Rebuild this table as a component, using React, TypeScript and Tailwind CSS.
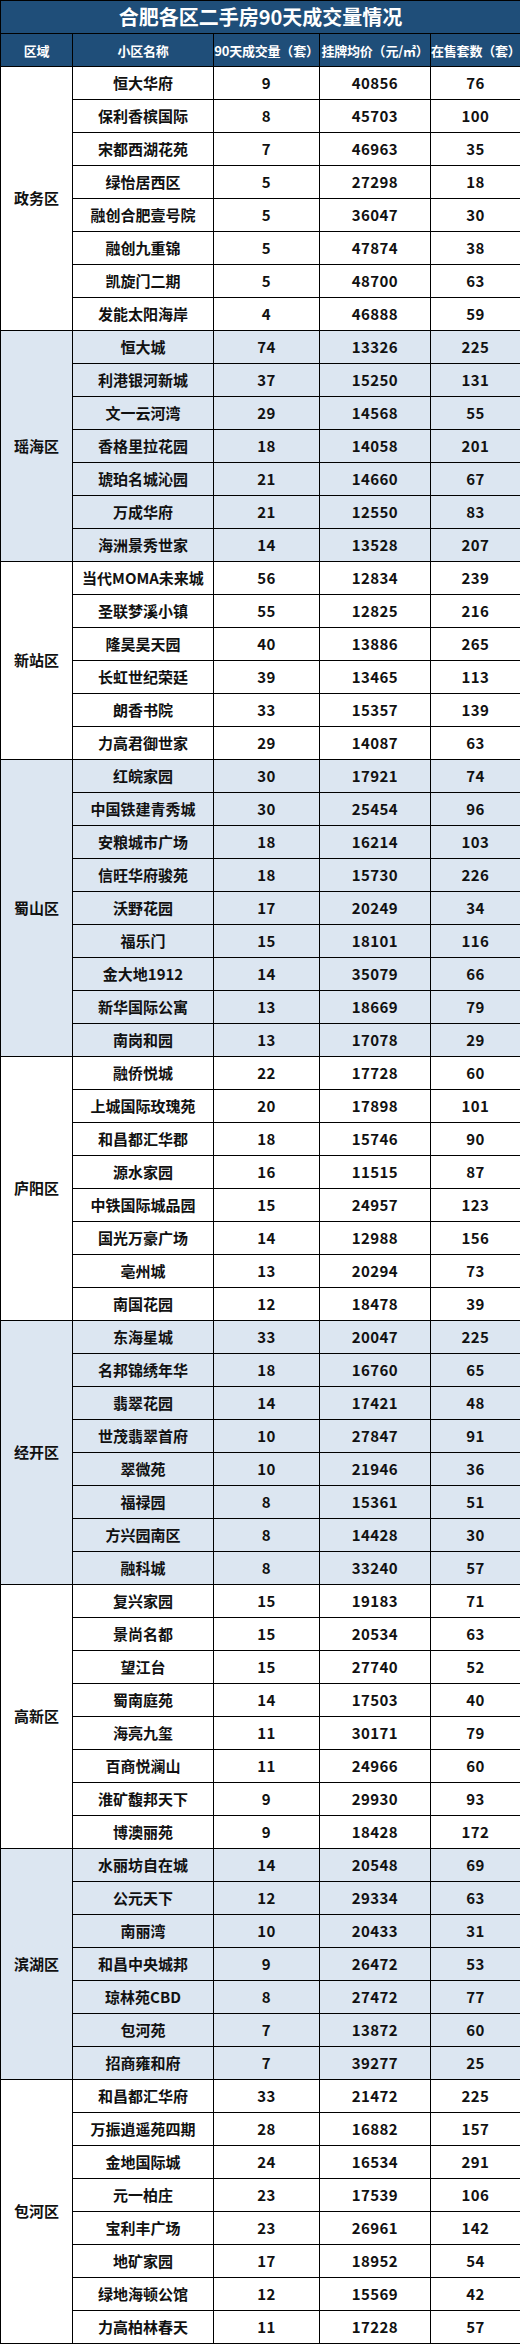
const districts: { name: string; rows: [string, number, number, number][] }[] = [
  {
    name: "政务区",
    rows: [
      ["恒大华府", 9, 40856, 76],
      ["保利香槟国际", 8, 45703, 100],
      ["宋都西湖花苑", 7, 46963, 35],
      ["绿怡居西区", 5, 27298, 18],
      ["融创合肥壹号院", 5, 36047, 30],
      ["融创九重锦", 5, 47874, 38],
      ["凯旋门二期", 5, 48700, 63],
      ["发能太阳海岸", 4, 46888, 59],
    ],
  },
  {
    name: "瑶海区",
    rows: [
      ["恒大城", 74, 13326, 225],
      ["利港银河新城", 37, 15250, 131],
      ["文一云河湾", 29, 14568, 55],
      ["香格里拉花园", 18, 14058, 201],
      ["琥珀名城沁园", 21, 14660, 67],
      ["万成华府", 21, 12550, 83],
      ["海洲景秀世家", 14, 13528, 207],
    ],
  },
  {
    name: "新站区",
    rows: [
      ["当代MOMA未来城", 56, 12834, 239],
      ["圣联梦溪小镇", 55, 12825, 216],
      ["隆昊昊天园", 40, 13886, 265],
      ["长虹世纪荣廷", 39, 13465, 113],
      ["朗香书院", 33, 15357, 139],
      ["力高君御世家", 29, 14087, 63],
    ],
  },
  {
    name: "蜀山区",
    rows: [
      ["红皖家园", 30, 17921, 74],
      ["中国铁建青秀城", 30, 25454, 96],
      ["安粮城市广场", 18, 16214, 103],
      ["信旺华府骏苑", 18, 15730, 226],
      ["沃野花园", 17, 20249, 34],
      ["福乐门", 15, 18101, 116],
      ["金大地1912", 14, 35079, 66],
      ["新华国际公寓", 13, 18669, 79],
      ["南岗和园", 13, 17078, 29],
    ],
  },
  {
    name: "庐阳区",
    rows: [
      ["融侨悦城", 22, 17728, 60],
      ["上城国际玫瑰苑", 20, 17898, 101],
      ["和昌都汇华郡", 18, 15746, 90],
      ["源水家园", 16, 11515, 87],
      ["中铁国际城品园", 15, 24957, 123],
      ["国光万豪广场", 14, 12988, 156],
      ["亳州城", 13, 20294, 73],
      ["南国花园", 12, 18478, 39],
    ],
  },
  {
    name: "经开区",
    rows: [
      ["东海星城", 33, 20047, 225],
      ["名邦锦绣年华", 18, 16760, 65],
      ["翡翠花园", 14, 17421, 48],
      ["世茂翡翠首府", 10, 27847, 91],
      ["翠微苑", 10, 21946, 36],
      ["福禄园", 8, 15361, 51],
      ["方兴园南区", 8, 14428, 30],
      ["融科城", 8, 33240, 57],
    ],
  },
  {
    name: "高新区",
    rows: [
      ["复兴家园", 15, 19183, 71],
      ["景尚名都", 15, 20534, 63],
      ["望江台", 15, 27740, 52],
      ["蜀南庭苑", 14, 17503, 40],
      ["海亮九玺", 11, 30171, 79],
      ["百商悦澜山", 11, 24966, 60],
      ["淮矿馥邦天下", 9, 29930, 93],
      ["博澳丽苑", 9, 18428, 172],
    ],
  },
  {
    name: "滨湖区",
    rows: [
      ["水丽坊自在城", 14, 20548, 69],
      ["公元天下", 12, 29334, 63],
      ["南丽湾", 10, 20433, 31],
      ["和昌中央城邦", 9, 26472, 53],
      ["琼林苑CBD", 8, 27472, 77],
      ["包河苑", 7, 13872, 60],
      ["招商雍和府", 7, 39277, 25],
    ],
  },
  {
    name: "包河区",
    rows: [
      ["和昌都汇华府", 33, 21472, 225],
      ["万振逍遥苑四期", 28, 16882, 157],
      ["金地国际城", 24, 16534, 291],
      ["元一柏庄", 23, 17539, 106],
      ["宝利丰广场", 23, 26961, 142],
      ["地矿家园", 17, 18952, 54],
      ["绿地海顿公馆", 12, 15569, 42],
      ["力高柏林春天", 11, 17228, 57],
    ],
  },
];

const headers = ["区域", "小区名称", "90天成交量（套）", "挂牌均价（元/㎡）", "在售套数（套）"];

export default function App() {
  return (
    <div className="w-[520px] bg-white font-['Noto_Sans_CJK_SC',sans-serif] text-[#111]">
      <table className="w-[520px] table-fixed border-collapse">
        <colgroup>
          <col className="w-[72px]" />
          <col className="w-[141px]" />
          <col className="w-[106px]" />
          <col className="w-[111px]" />
          <col className="w-[90px]" />
        </colgroup>
        <thead>
          <tr className="h-[33px]">
            <th
              colSpan={5}
              className="border border-black bg-[#1F4E79] p-0 text-center text-[20px] font-bold leading-none text-white"
            >
              合肥各区二手房90天成交量情况
            </th>
          </tr>
          <tr className="h-[33px]">
            {headers.map((h) => (
              <th
                key={h}
                className="whitespace-nowrap border border-black bg-[#1F4E79] p-0 text-center text-[13px] font-bold leading-none tracking-[-0.2px] text-white"
              >
                {h}
              </th>
            ))}
          </tr>
        </thead>
        <tbody>
          {districts.map((d, di) => {
            const bg = di % 2 === 1 ? "bg-[#DCE6F1]" : "bg-white";
            return d.rows.map((r, ri) => (
              <tr key={d.name + r[0]} className={`h-[33px] ${bg}`}>
                {ri === 0 && (
                  <td
                    rowSpan={d.rows.length}
                    className="border border-black p-0 text-center text-[15px] font-bold"
                  >
                    {d.name}
                  </td>
                )}
                <td className="whitespace-nowrap border border-black p-0 text-center text-[15px] font-bold">
                  {r[0]}
                </td>
                <td className="border border-black p-0 text-center text-[15px] font-bold tracking-[0.4px]">
                  {r[1]}
                </td>
                <td className="border border-black p-0 text-center text-[15px] font-bold tracking-[0.4px]">
                  {r[2]}
                </td>
                <td className="border border-black p-0 text-center text-[15px] font-bold tracking-[0.4px]">
                  {r[3]}
                </td>
              </tr>
            ));
          })}
        </tbody>
      </table>
    </div>
  );
}
